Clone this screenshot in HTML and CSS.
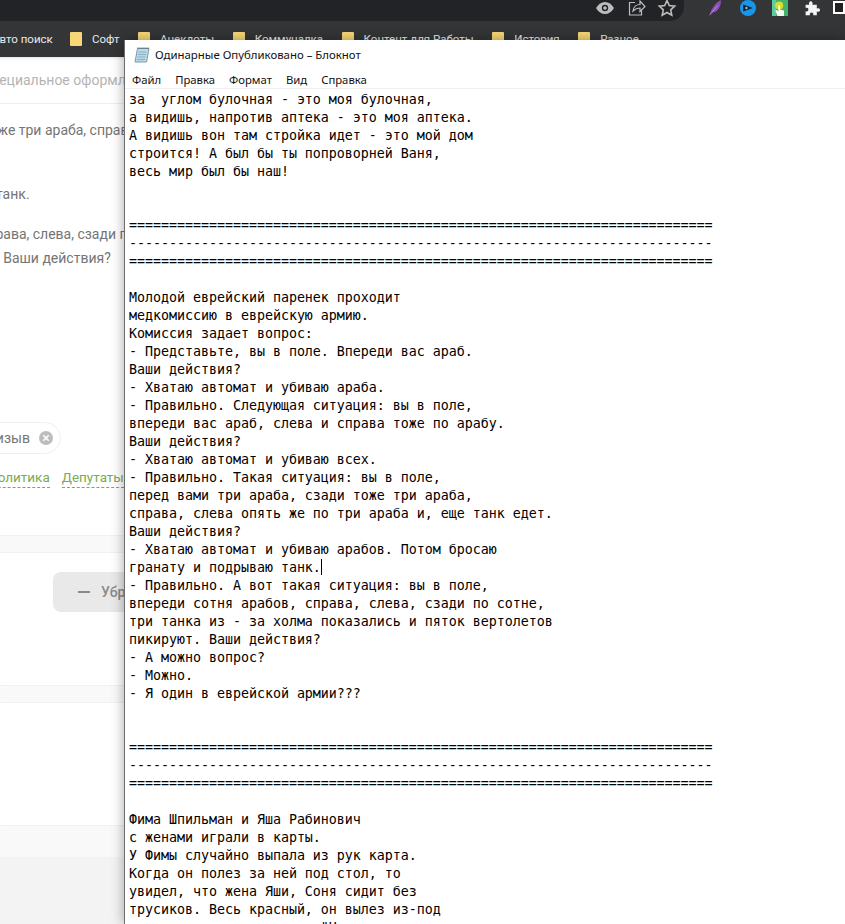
FILE: index.html
```html
<!DOCTYPE html>
<html lang="ru">
<head>
<meta charset="utf-8">
<title>Блокнот</title>
<link rel="stylesheet" href="styles.css">
</head>
<body>
<header class="chrome">
  <div class="tabstrip">
    <div class="omni-end">
      <svg class="ic" viewBox="0 0 20 20"><path d="M1 10c2.500-4 5.500-6 9-6s6.500 2 9 6c-2.500 4-5.500 6-9 6s-6.500-2-9-6z" fill="#bdbdbd"/><circle cx="10" cy="10" r="3.200" fill="#222327"/><circle cx="10" cy="10" r="1.800" fill="#bdbdbd"/></svg>
      <svg class="ic" viewBox="0 0 20 20" fill="none" stroke="#bdbdbd" stroke-width="1.200"><path d="M9 4.500H3.500v12.500h12v-5"/><path d="M7 13c.5-4 3.500-6.500 7-6.500V3l5 5.500-5 5V10c-3 0-5 1-7 3z"/></svg>
      <svg class="ic" viewBox="0 0 20 20" fill="none" stroke="#bdbdbd" stroke-width="1.600"><path d="M10 2.500l2.300 5 5.400.6-4 3.700 1.100 5.400-4.800-2.700-4.800 2.700 1.100-5.400-4-3.700 5.400-.6z"/></svg>
    </div>
    <div class="exts">
      <svg class="ext" viewBox="0 0 20 20"><path d="M2 19C4 11 9 4 16 0c1 5-2 12-7 15l-5 1z" fill="#8a4fb5"/><path d="M2 19l10-12" stroke="#c9a0e0" stroke-width="1"/></svg>
      <svg class="ext" viewBox="0 0 20 20"><circle cx="10" cy="10" r="10" fill="#1597ee"/><path d="M4 5.500l12 4.500-12 4.500z" fill="#14202c"/><circle cx="8" cy="10" r="1.500" fill="#9fb5c4"/></svg>
      <svg class="ext" viewBox="0 0 20 20"><rect x="0" y="0" width="20" height="20" fill="#45b26b"/><rect x="0" y="0" width="5" height="20" fill="#5fc9a0"/><circle cx="9" cy="7" r="5" fill="#d6dd2e"/><path d="M8 7h2v5l5 1v7H7l-3-7 2-.5 2 1.500z" fill="#f4fbf7"/></svg>
      <svg class="ext" viewBox="0 0 20 20"><path d="M2 6h4.500c-.8-3 .5-4.500 2-4.500s2.800 1.500 2 4.500H16v4.500c3-.8 4 .5 4 2s-1 2.800-4 2V19h-4.500c.8-2.500-.5-3.500-2-3.500s-2.800 1-2 3.500H2v-5c2.500.8 3.500-.5 3.500-2S4.500 9.200 2 10z" fill="#f4f4f4"/></svg>
      <span class="profile"></span>
    </div>
  </div>
  <nav class="bookmarks">
    <span class="bm-cut">Авто поиск</span>
    <span class="bm"><i class="folder"></i>Софт</span>
    <span class="bm"><i class="folder"></i>Анекдоты</span>
    <span class="bm"><i class="folder"></i>Коммуналка</span>
    <span class="bm"><i class="folder"></i>Контент для Работы</span>
    <span class="bm"><i class="folder"></i>История</span>
    <span class="bm"><i class="folder"></i>Разное</span>
  </nav>
</header>

<main class="page">
  <div class="row-head"><span class="head-text">Специальное оформление</span></div>
  <p class="t t-1">тоже три араба, справа, слева</p>
  <p class="t t-2">танк.</p>
  <p class="t t-3">справа, слева, сзади по сотне</p>
  <p class="t t-4">. Ваши действия?</p>
  <div class="chip-row"><span class="chip">Призыв<i class="chip-x"><svg viewBox="0 0 14 14"><path d="M4.300 4.300l5.400 5.400M9.700 4.300l-5.400 5.400" stroke="#fff" stroke-width="1.600"/></svg></i></span></div>
  <div class="tags"><span class="tag tag-cut">Политика</span><span class="tag">Депутаты</span></div>
  <div class="band band-a"></div>
  <div class="btn-row"><div class="btn"><i class="dash"></i>Убрать</div></div>
  <div class="band band-b"></div>
  <div class="band band-c"></div>
  <div class="footer"></div>
</main>

<section class="win">
  <div class="titlebar">
    <svg class="np-ic" viewBox="0 0 16 16"><path d="M3.500 1.500H15L12.500 15H1z" fill="#b9dcea" stroke="#8296a3"/><path d="M4.500 5h8M4 7.500h8M3.500 10h8M3 12.500h8" stroke="#7aa3b8" stroke-width=".8"/><path d="M3.500 1h11.500" stroke="#444" stroke-dasharray="1 1"/></svg>
    <span>Одинарные Опубликовано – Блокнот</span>
  </div>
  <div class="menu"><span>Файл</span><span>Правка</span><span>Формат</span><span>Вид</span><span>Справка</span></div>
<pre class="text">за  углом булочная - это моя булочная,
а видишь, напротив аптека - это моя аптека.
А видишь вон там стройка идет - это мой дом
строится! А был бы ты попроворней Ваня,
весь мир был бы наш!


=========================================================================
-------------------------------------------------------------------------
=========================================================================

Молодой еврейский паренек проходит
медкомиссию в еврейскую армию.
Комиссия задает вопрос:
- Представьте, вы в поле. Впереди вас араб.
Ваши действия?
- Хватаю автомат и убиваю араба.
- Правильно. Следующая ситуация: вы в поле,
впереди вас араб, слева и справа тоже по арабу.
Ваши действия?
- Хватаю автомат и убиваю всех.
- Правильно. Такая ситуация: вы в поле,
перед вами три араба, сзади тоже три араба,
справа, слева опять же по три араба и, еще танк едет.
Ваши действия?
- Хватаю автомат и убиваю арабов. Потом бросаю
гранату и подрываю танк.<i class="caret"></i>
- Правильно. А вот такая ситуация: вы в поле,
впереди сотня арабов, справа, слева, сзади по сотне,
три танка из - за холма показались и пяток вертолетов
пикируют. Ваши действия?
- А можно вопрос?
- Можно.
- Я один в еврейской армии???


=========================================================================
-------------------------------------------------------------------------
=========================================================================

Фима Шпильман и Яша Рабинович
с женами играли в карты.
У Фимы случайно выпала из рук карта.
Когда он полез за ней под стол, то
увидел, что жена Яши, Соня сидит без
трусиков. Весь красный, он вылез из-под
                        "Ч</pre>
</section>
</body>
</html>
```
FILE: styles.css
```css
* { box-sizing: border-box; }
html, body { margin: 0; height: 924px; overflow: hidden; background: #fff; }
body { font-family: Roboto, "Liberation Sans", sans-serif; position: relative; }
p { margin: 0; }
i { display: block; }

.chrome { height: 57px; background: #343537; overflow: hidden; }
.tabstrip { height: 21px; display: flex; }
.omni-end { width: 693px; height: 21px; background: #222327; border-radius: 0 0 14px 0; display: flex; justify-content: flex-end; align-items: center; gap: 11px; padding: 0 7px 6px 0; }
.ic { width: 20px; height: 20px; flex: none; }
.exts { flex: 1; display: flex; align-items: flex-start; gap: 16px; padding: 0 0 0 24px; white-space: nowrap; }
.ext { width: 16px; height: 16px; flex: none; }
.profile { width: 12px; height: 13px; margin: 1px 0 0 -3px; border: 2px solid #fff; background: #222; flex: none; }

.bookmarks { height: 36px; display: flex; align-items: center; font-size: 11.5px; color: #e8eaed; white-space: nowrap; }
.bm-cut { margin-left: -8px; width: 78px; }
.bm { display: flex; align-items: center; gap: 10px; margin-right: 18.5px; }
.folder { width: 12px; height: 14px; background: #f8d775; border-radius: 1px; }

.page { height: 867px; position: relative; background: #fff; overflow: hidden; box-shadow: inset 0 3px 3px -2px rgba(0,0,0,.12); color: #757575; font-size: 14px; white-space: nowrap; }
.row-head { height: 47px; border-bottom: 1px solid #efefef; padding: 14px 0 0 0; color: #b4b4b4; font-size: 14px; line-height: 18px; }
.head-text { display: block; margin-left: -18px; }
.t { height: 20px; line-height: 20px; }
.t-1 { margin: 16px 0 0 -17px; }
.t-2 { margin: 44px 0 0 -4px; }
.t-3 { margin: 20px 0 0 -20px; }
.t-4 { margin: 4px 0 0 -4px; }

.chip-row { margin-top: 154px; height: 32px; }
.chip { display: inline-flex; align-items: center; gap: 9px; height: 32px; padding: 0 7px 0 14px; border: 1px solid #f0f0f0; border-radius: 16px; margin-left: -37px; }
.chip-x { width: 14px; height: 14px; border-radius: 50%; background: #bdbdbd; }
.chip-x svg { display: block; }
.tags { display: flex; gap: 12px; margin-top: 14px; height: 20px; font-size: 13.5px; }
.tag { color: #7cab4f; border-bottom: 1px dashed #7cab4f; height: 20px; line-height: 18px; }
.tag-cut { margin-left: -12px; }

.band { background: #f9f9f9; border-top: 1px solid #f1f1f1; border-bottom: 1px solid #f1f1f1; }
.band-a { height: 18px; margin-top: 47px; }
.btn-row { height: 132px; padding-top: 19px; }
.btn { display: flex; align-items: center; gap: 11px; width: 180px; height: 40px; margin-left: 53px; padding-left: 25px; border-radius: 8px; background: #e9e9e9; color: #8a8a8a; font-weight: 500; }
.dash { width: 12px; height: 2px; background: #8a8a8a; }
.band-b { height: 18px; }
.band-c { height: 32px; margin-top: 122px; border-bottom: 0; }
.footer { height: 69px; background: #f3f3f3; }

.win { position: absolute; left: 124px; top: 40px; width: 721px; height: 884px; background: #fff; border-left: 1px solid #6e6e6e; box-shadow: 0 0 12px rgba(0,0,0,.35); overflow: hidden; }
.titlebar { height: 29px; display: flex; align-items: center; gap: 5px; padding-left: 9px; font: 11.4px "Noto Sans", "Open Sans", sans-serif; color: #111; }
.np-ic { width: 16px; height: 16px; flex: none; }
.menu { height: 20px; display: flex; gap: 14px; padding: 1px 0 0 7px; font: 11.3px "Noto Sans", "Open Sans", sans-serif; color: #111; align-items: center; border-bottom: 1px solid #f0f0f0; }
.text { margin: 0; padding: 2px 0 0 4px; font: 13.33px/18px "DejaVu Sans Mono", "Liberation Mono", monospace; letter-spacing: -0.03px; color: #000; }
.caret { display: inline-block; width: 1px; height: 16px; background: #000; vertical-align: -3px; }
```
